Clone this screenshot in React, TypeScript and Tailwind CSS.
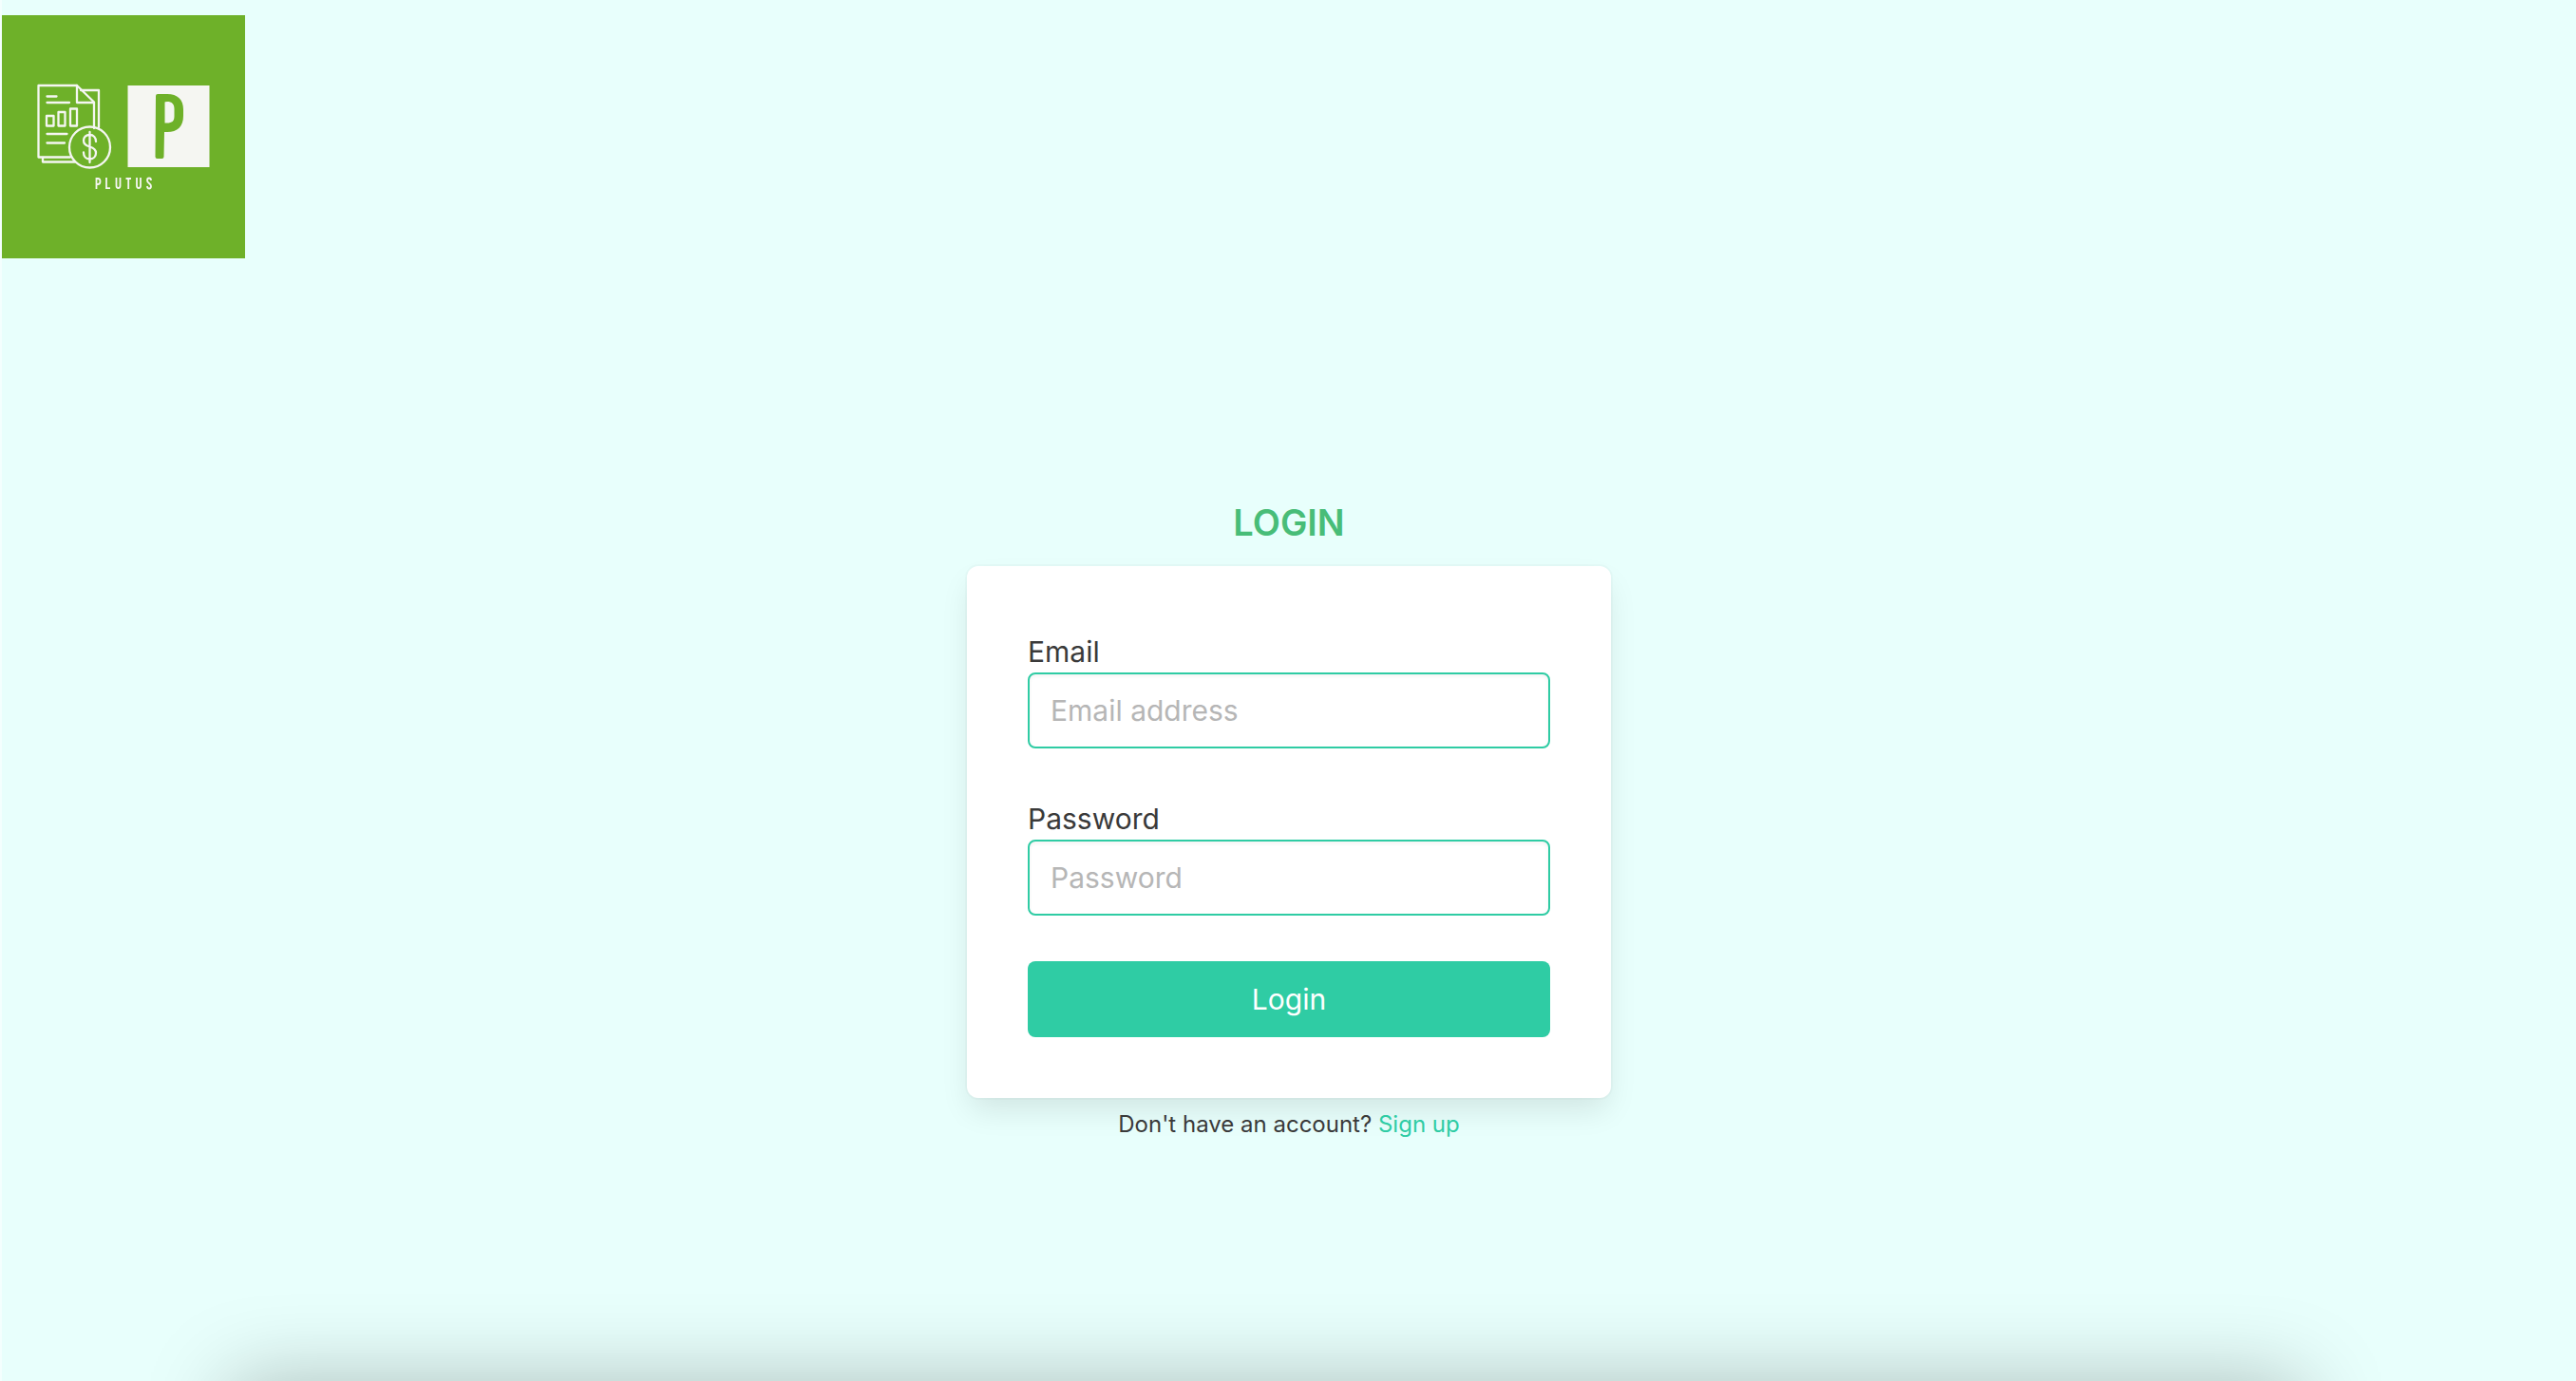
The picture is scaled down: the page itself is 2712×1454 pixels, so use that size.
import React from "react";

function Logo() {
  return (
    <svg viewBox="0 0 256 256" className="block size-64" role="img" aria-label="Plutus">
      <rect width="256" height="256" fill="#6eb129" />
      <g fill="none" stroke="#f5f6f2" strokeWidth="2.300" strokeLinecap="round" strokeLinejoin="round">
        <path d="M38.500 149.500V74H79l18 17.500V119M38.500 149.500H72" />
        <path d="M79 74v18h18" />
        <path d="M83 79h19v39M43 150v4.500h34" />
        <path d="M47.500 85.500h10M47.500 92h23.500M47.500 125h21M47.500 134.500h18.500" />
        <path d="M47 106h7.500v10.500H47zM59.500 102h7v14.500h-7zM72 98.500h7v18h-7z" />
        <circle cx="92.500" cy="139" r="21.500" />
        <path d="M92.500 123v32M99 133c0-4-2.500-7-6.500-7s-6.500 2.500-6.500 6c0 4 3 5.500 6.500 6.500s6.500 2.500 6.500 6.500c0 3.500-2.500 6.500-6.500 6.500s-6.500-3-6.500-7" />
      </g>
      <rect x="132.500" y="74" width="86" height="86" fill="#f5f6f2" />
      <path
        fillRule="evenodd"
        fill="#6eb129"
        d="M164 83h10c11 0 17 6 17 16v7c0 11-6 17-17 17h-3l-.500 26q0 2-2 2h-5q-2 0-2-2l.500-64q0-2 2-2zM171.500 91.500v22h2.500c5 0 7.500-2 7.500-7v-8c0-5-2.500-7.500-7.500-7.500q-2.500 0-2.500.500z"
      />
      <g fill="none" stroke="#f5f6f2" strokeWidth="1.800">
        <path d="M99.500 183v-11h1.500q2.500 0 2.500 3t-2.500 3h-1.500M110 171v11.200h4M120.500 171v8.500q0 2.500 2 2.500t2-2.500V171M130.500 172h5.500M133.200 172v11M142 171v8.500q0 2.500 2 2.500t2-2.500V171M157 174q0-2.500-2-2.500t-2 2.500c0 3 4 3 4 6q0 2.500-2 2.500t-2-2.500" />
      </g>
    </svg>
  );
}

type FieldProps = { id: string; label: string; type: string; placeholder: string };

function Field({ id, label, type, placeholder }: FieldProps) {
  return (
    <div className="flex flex-col">
      <label htmlFor={id} className="pt-1 text-[30px] leading-11">
        {label}
      </label>
      <input
        id={id}
        type={type}
        placeholder={placeholder}
        className="h-20 w-full rounded-lg border-2 border-[#2fcca4] bg-white px-[22px] text-[30px] shadow-[inset_0_2px_4px_rgba(10,10,10,0.05)] outline-none placeholder:text-[#b6b6b6]"
      />
    </div>
  );
}

export default function App() {
  return (
    <div className="relative flex min-h-screen flex-col overflow-hidden border-l-2 border-[#f4fffe] bg-[#e8fffc] pt-4 font-['Inter','Liberation_Sans',sans-serif] text-[#3a3a3a]">
      <header>
        <Logo />
      </header>
      <main className="flex flex-col items-center pt-62">
        <h1 className="pb-4 text-[38px] leading-15 font-semibold text-[#48bd78]">LOGIN</h1>
        <form
          className="flex w-full max-w-[678px] flex-col gap-12 rounded-xl bg-white p-16 shadow-[0_16px_32px_-4px_rgba(10,10,10,0.1),0_0_0_2px_rgba(10,10,10,0.02)]"
          onSubmit={(e) => e.preventDefault()}
        >
          <Field id="email" label="Email" type="email" placeholder="Email address" />
          <Field id="password" label="Password" type="password" placeholder="Password" />
          <button type="submit" className="h-20 rounded-lg bg-[#2fcca4] text-[30px] text-white">
            Login
          </button>
        </form>
        <p className="pt-2 text-2xl leading-10">
          Don't have an account?{" "}
          <a href="#signup" className="text-[#2fcca4]">
            Sign up
          </a>
        </p>
      </main>
      <div className="pointer-events-none absolute top-full right-72 left-60 h-60 shadow-[0_0_88px_rgba(0,0,0,0.26)]" />
    </div>
  );
}
